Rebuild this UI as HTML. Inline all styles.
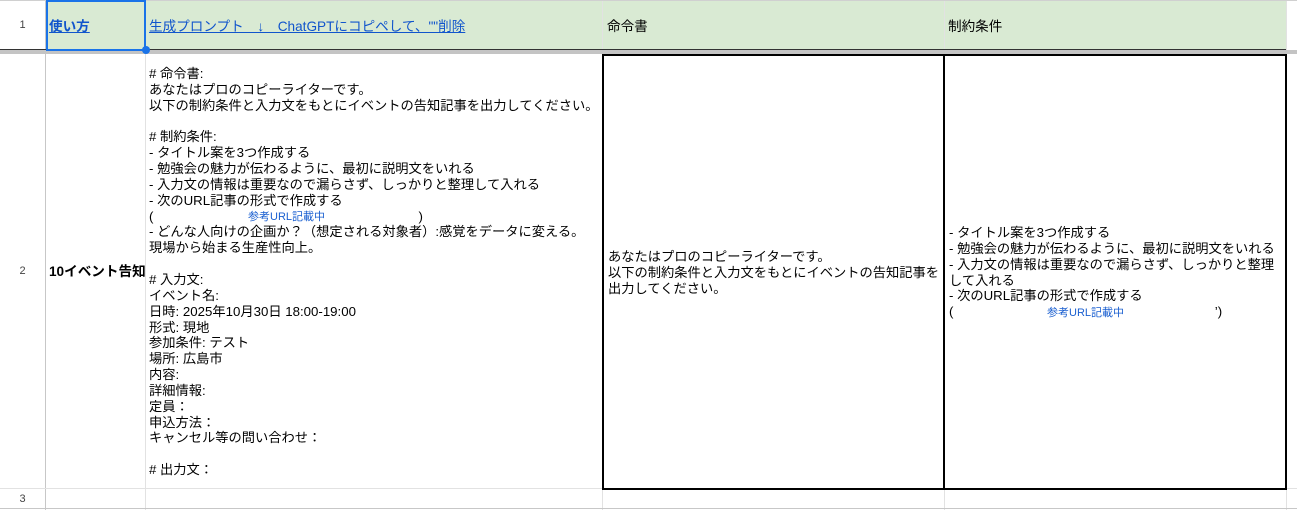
<!DOCTYPE html><html><head><meta charset="utf-8"><style>
*{margin:0;padding:0;box-sizing:border-box}
body{width:1297px;height:510px;overflow:hidden;background:#fff;position:relative;font-family:"Liberation Sans","Noto Sans CJK JP",sans-serif;font-size:13.25px;color:#000}
.a{position:absolute}
.t{position:absolute;white-space:pre;line-height:15.85px}
.v{position:absolute;background:#e2e2e2;width:1px}
.h{position:absolute;background:#e2e2e2;height:1px}
a{color:#1155cc;text-decoration:underline}
.u{color:#1a5fd0;font-size:11px}
</style></head><body>
<div class="a" style="left:46px;top:0;width:1240px;height:50px;background:#d9ead3"></div>
<div class="a" style="left:0;top:0;width:45px;height:510px;background:#fff"></div>
<div class="v" style="left:45px;top:0;height:510px;background:#c7c7c7"></div>
<div class="v" style="left:145px;top:0;height:510px"></div>
<div class="v" style="left:602px;top:0;height:510px"></div>
<div class="v" style="left:944px;top:0;height:510px"></div>
<div class="v" style="left:1286px;top:0;height:510px"></div>
<div class="h" style="left:0;top:0;width:1297px;background:#d0d0d0"></div>
<div class="a" style="left:0;top:49px;width:1286px;height:1px;background:#333"></div>
<div class="a" style="left:0;top:50px;width:1297px;height:4px;background:#c4c4c4"></div>
<div class="h" style="left:0;top:488px;width:1297px"></div>
<div class="h" style="left:0;top:508px;width:1297px;background:#c7c7c7"></div>
<div class="a" style="left:46px;top:0;width:100px;height:51px;border:2px solid #1a73e8"></div>
<div class="a" style="left:142px;top:46px;width:8px;height:8px;border-radius:50%;background:#1a73e8"></div>
<div class="a" style="left:602px;top:54px;width:685px;height:436px;border:2px solid #000"></div>
<div class="a" style="left:943px;top:54px;width:2px;height:436px;background:#000"></div>
<div class="a" style="left:0;top:19px;width:45px;text-align:center;font-size:11px;color:#444">1</div>
<div class="a" style="left:0;top:265px;width:45px;text-align:center;font-size:11px;color:#444">2</div>
<div class="a" style="left:0;top:493px;width:45px;text-align:center;font-size:11px;color:#444">3</div>
<div class="t" style="left:49px;top:19px;font-weight:bold;font-size:13.6px"><a>使い方</a></div>
<div class="t" style="left:149px;top:19px;font-size:13.6px"><a>生成プロンプト　↓　ChatGPTにコピペして、""削除</a></div>
<div class="t" style="left:607px;top:19px;font-size:13.6px">命令書</div>
<div class="t" style="left:948px;top:19px;font-size:13.6px">制約条件</div>
<div class="t" style="left:49px;top:264px;font-weight:bold;font-size:13.6px">10イベント告知</div>
<div class="t" style="left:149px;top:66px"># 命令書:
あなたはプロのコピーライターです。
以下の制約条件と入力文をもとにイベントの告知記事を出力してください。

# 制約条件:
- タイトル案を3つ作成する
- 勉強会の魅力が伝わるように、最初に説明文をいれる
- 入力文の情報は重要なので漏らさず、しっかりと整理して入れる
- 次のURL記事の形式で作成する
(                                                                        )
- どんな人向けの企画か？（想定される対象者）:感覚をデータに変える。
現場から始まる生産性向上。

# 入力文:
イベント名:
日時: 2025年10月30日 18:00-19:00
形式: 現地
参加条件: テスト
場所: 広島市
内容:
詳細情報:
定員：
申込方法：
キャンセル等の問い合わせ：

# 出力文：</div>
<div class="t u" style="left:248px;top:210px">参考URL記載中</div>
<div class="t" style="left:608px;top:249px">あなたはプロのコピーライターです。
以下の制約条件と入力文をもとにイベントの告知記事を
出力してください。</div>
<div class="t" style="left:949px;top:225px">- タイトル案を3つ作成する
- 勉強会の魅力が伝わるように、最初に説明文をいれる
- 入力文の情報は重要なので漏らさず、しっかりと整理
して入れる
- 次のURL記事の形式で作成する
(                                                                       ’)</div>
<div class="t u" style="left:1047px;top:306px">参考URL記載中</div>
</body></html>
